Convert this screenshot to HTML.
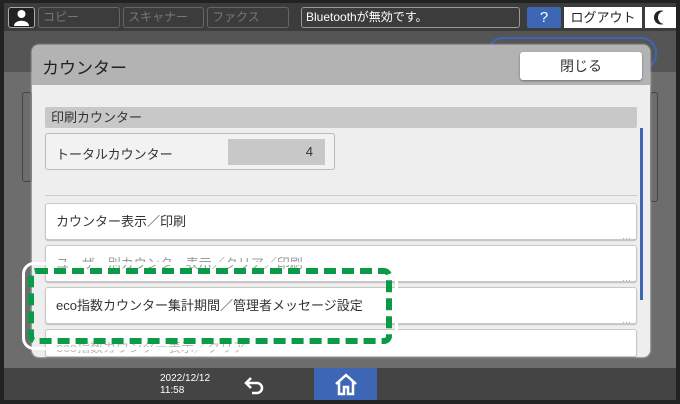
<!DOCTYPE html><html><head><meta charset="utf-8"><style>
*{margin:0;padding:0;box-sizing:border-box}
body{width:680px;height:404px;overflow:hidden;background:#222;font-family:"Liberation Sans","Noto Sans CJK JP",sans-serif;position:relative}
.a{position:absolute}
.tb{left:4px;top:3px;width:672px;height:28px;background:#3c3c3c}
.tab{top:7px;height:21px;border:1px solid #666;border-radius:3px;color:#777;font-size:12px;line-height:19px;padding-left:4px;white-space:nowrap;overflow:hidden}
.btn{background:#fff;border-radius:3px;box-shadow:0 1px 2px rgba(0,0,0,.4);color:#333}
.item{left:45px;width:592px;height:37px;background:#fff;border:1px solid #c8c8c8;border-radius:3px;font-size:13px;color:#333;line-height:35px;padding-left:10px;box-shadow:0 1px 1px rgba(0,0,0,.2);white-space:nowrap;overflow:hidden}
.dots{position:absolute;right:5px;bottom:-2px;font-size:9px;color:#999;line-height:10px}
</style></head><body>
<div class="a" style="left:4px;top:31px;width:672px;height:41px;background:#555"></div>
<div class="a" style="left:4px;top:72px;width:672px;height:296px;background:#6d6d6d"></div>
<div class="a" style="left:22px;top:92px;width:10px;height:90px;border:1px solid #444;border-radius:3px"></div>
<div class="a" style="left:650px;top:92px;width:8px;height:110px;border:1px solid #444;border-radius:3px"></div>
<div class="a" style="left:487px;top:37px;width:170px;height:33px;border:2px solid #3d67b5;border-radius:16px"></div>
<div class="a tb"></div>
<div class="a" style="left:8px;top:7px;width:27px;height:21px;border:1px solid #aaa;border-radius:3px;background:#222"><svg width="25" height="19"><circle cx="12.5" cy="6" r="4" fill="#fff"/><path d="M5 18c0-7 15-7 15 0z" fill="#fff"/></svg></div>
<div class="a tab" style="left:38px;width:82px">コピー</div>
<div class="a tab" style="left:123px;width:81px">スキャナー</div>
<div class="a tab" style="left:207px;width:82px">ファクス</div>
<div class="a tab" style="left:301px;width:219px;color:#fff;border-color:#999;font-size:12px">Bluetoothが無効です。</div>
<div class="a" style="left:527px;top:7px;width:34px;height:21px;background:#3d67b5;color:#fff;font-size:15px;text-align:center;line-height:21px;border-radius:2px">?</div>
<div class="a" style="left:564px;top:7px;width:78px;height:21px;background:#fff;font-size:13px;line-height:21px;text-align:center;color:#222">ログアウト</div>
<div class="a" style="left:645px;top:7px;width:31px;height:21px;background:#fff"><svg width="31" height="21"><circle cx="16" cy="10.5" r="7" fill="#222"/><circle cx="19.5" cy="10.5" r="6.5" fill="#fff"/></svg></div>
<div class="a" style="left:32px;top:45px;width:618px;height:312px;background:#eee;border-radius:7px;overflow:hidden;box-shadow:0 0 2px #fff">
<div class="a" style="left:0;top:0;width:618px;height:40px;background:#b3b3b3"></div>
<div class="a" style="left:10px;top:9px;font-size:17px;color:#222">カウンター</div>
<div class="a btn" style="left:488px;top:7px;width:122px;height:28px;text-align:center;line-height:28px;font-size:14px">閉じる</div>
</div>
<div class="a" style="left:45px;top:107px;width:592px;height:21px;background:#c8c8c8;border-radius:2px;font-size:13px;line-height:21px;padding-left:6px;color:#333">印刷カウンター</div>
<div class="a" style="left:45px;top:133px;width:290px;height:37px;background:#f2f2f2;border:1px solid #bbb;border-radius:3px"></div>
<div class="a" style="left:56px;top:144px;font-size:13px;color:#333">トータルカウンター</div>
<div class="a" style="left:228px;top:139px;width:97px;height:26px;background:#c8c8c8;text-align:right;padding-right:12px;line-height:26px;font-size:13px;color:#333">4</div>
<div class="a" style="left:45px;top:195px;width:592px;height:1px;background:#ccc"></div>
<div class="a item" style="top:203px">カウンター表示／印刷<span class="dots">…</span></div>
<div class="a item" style="top:245px;color:#999">ユーザー別カウンター表示／クリア／印刷<span class="dots">…</span></div>
<div class="a item" style="top:287px">eco指数カウンター集計期間／管理者メッセージ設定<span class="dots">…</span></div>
<div class="a item" style="top:329px;height:28px;color:#bbb">eco指数カウンター表示／クリア</div>
<div class="a" style="left:640px;top:128px;width:3px;height:172px;background:#3d67b5"></div>
<div class="a" style="left:22px;top:262px;width:376px;height:88px;border:3px solid #fff;border-radius:12px"></div>
<div class="a" style="left:28px;top:268px;width:364px;height:76px;border:6px dashed #0a9a48;border-radius:8px"></div>
<div class="a" style="left:4px;top:368px;width:672px;height:32px;background:#444"></div>
<div class="a" style="left:160px;top:373px;color:#fff;font-size:10px;line-height:12px">2022/12/12<br>11:58</div>
<svg class="a" style="left:243px;top:374px" width="24" height="22"><path d="M8 4L3 9l5 5M3 9h11a5 5 0 0 1 0 10H9" stroke="#fff" stroke-width="2.5" fill="none"/></svg>
<div class="a" style="left:314px;top:368px;width:63px;height:32px;background:#3d67b5"></div>
<svg class="a" style="left:334px;top:372px" width="24" height="24"><path d="M2 12L12 3l10 9M5 10v12h5v-7h4v7h5V10" stroke="#fff" stroke-width="2.5" fill="none"/></svg>
</body></html>
